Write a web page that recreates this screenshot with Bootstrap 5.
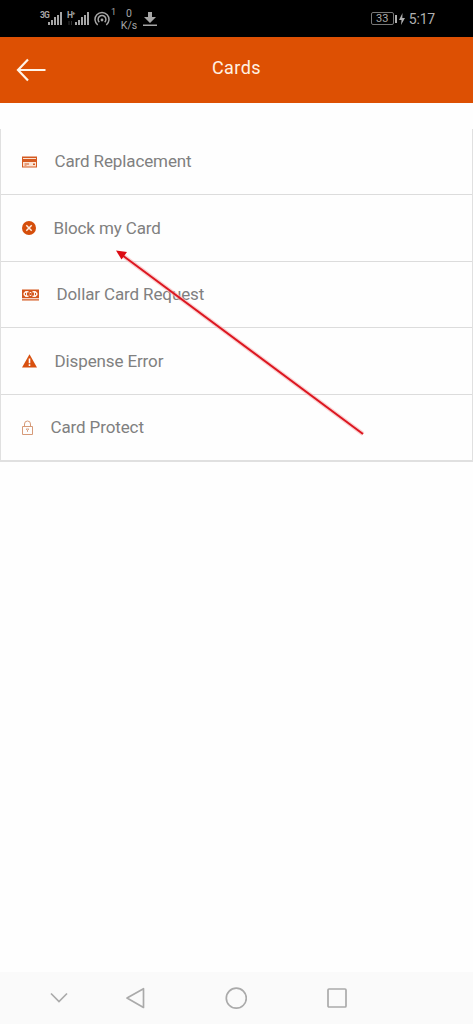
<!DOCTYPE html>
<html lang="en">
<head>
<meta charset="utf-8">
<meta name="viewport" content="width=device-width, initial-scale=1">
<title>Cards</title>
<link href="https://cdn.jsdelivr.net/npm/bootstrap@5.3.0/dist/css/bootstrap.min.css" rel="stylesheet">
<style>
body{font-family:Roboto,sans-serif;height:1024px;overflow:hidden;background:#fefefe}
svg{display:block;flex:none}
.status{height:37px;background:#000;color:#a6a6a6;padding:0 38px 0 40px}
.net{font-size:8.5px;line-height:8px;font-weight:700;width:8px;letter-spacing:-.9px;margin-top:11px}
.net sup{font-size:6px}
.tether{font-size:9px;line-height:9px;margin:8px 0 0 1px;width:6px}
.rate{font-size:10.5px;line-height:12px;width:20px;margin:8px 4px 0 2px}
.battery{width:23px;height:13px;border:1px solid #777;border-radius:2px;font-size:11px;line-height:11px;color:#aaa}
.clock{font-size:14px;line-height:16px;color:#b0b0b0;margin-left:4px;letter-spacing:-.2px}
.appbar{height:66px;background:#dd5003;color:#fff2e4;padding:0 16px}
.appbar .side{width:30px}
.title{font-size:18px;font-weight:400;line-height:22px;letter-spacing:.45px;margin-top:-5px}
.menu{margin-top:26px;border:solid #e0e0e0;border-width:0 1px 2px;border-radius:0;height:333px}
.menu .list-group-item{flex:1 1 0;border-color:#dcdcdc;padding:0 21px;color:#808080;font-size:17px;letter-spacing:-.12px;line-height:20px;background:#fefefe}
.menu .list-group-item:last-child{border-bottom:0}
.menu span{margin:-.5px 0 0 17.500px}
.pointer{left:100px;top:240px;pointer-events:none;z-index:2}
.navkeys{height:52px;background:#fafafa;padding-left:50px}
.key-back{margin-left:57px}
.key-next{margin-left:80px}
</style>
</head>
<body class="d-flex flex-column">
<header class="status d-flex justify-content-between">
  <div class="d-flex">
    <span class="net">3G</span>
    <svg width="15" height="37" fill="#a6a6a6"><path d="M0 22h2v3H0zM3 20h2v5H3zM6 17h2v8H6zM9 15h2v10H9zM12 12h2v13h-2z"/></svg>
    <span class="net ms-1">H<sup>+</sup></span>
    <svg width="15" height="37" fill="#a6a6a6" overflow="visible"><path d="M0 22h2v3H0zM3 20h2v5H3zM6 17h2v8H6zM9 15h2v10H9zM12 12h2v13h-2z"/><path d="M-6 21v4M-3.500 21v4" stroke="#333"/></svg>
    <svg class="ms-1" width="16" height="37" viewBox="0 0 16 37" fill="none" stroke="#a6a6a6" stroke-width="1.5"><path d="M3.700 25a7 7 0 1 1 8.600 0M5.300 22.200a3.900 3.900 0 1 1 5.400 0"/><circle cx="8" cy="20" r="1.400" fill="#a6a6a6" stroke="none"/></svg>
    <span class="tether">1</span>
    <div class="rate text-center">0<br>K/s</div>
    <svg width="14" height="37" fill="#a6a6a6"><path d="M5 12h4v5h4l-6 6-6-6h4zM0 24.500h14v1.500H0z"/></svg>
  </div>
  <div class="d-flex align-items-center">
    <div class="battery text-center">33</div>
    <svg width="11" height="14" fill="#b0b0b0"><path d="M1 3h2v8H1zM8.500 1 5 8h2.500L7 13l4-7H8.300z"/></svg>
    <span class="clock">5:17</span>
  </div>
</header>
<nav class="appbar d-flex align-items-center justify-content-between">
  <svg class="side" width="30" height="24" fill="none" stroke="#fff4e8" stroke-width="2.200"><path d="M12 1.500 2 12l10 10.500M1.500 12H29.500"/></svg>
  <h1 class="title mb-0">Cards</h1>
  <span class="side"></span>
</nav>
<main class="flex-grow-1">
  <div class="list-group list-group-flush menu">
    <a class="list-group-item d-flex align-items-center" href="#"><svg width="15" height="12"><path fill="#d55a20" d="M0 .5h15v11H0z"/><path fill="#fbe3d4" d="M1 2h13v1H1zM1 6h13v4.500H1z"/><path fill="#d55a20" d="M2.500 7.500H7v1H2.500zM11 7.500h2v1.500h-2zM2.500 9.200h2v.6h-2z"/></svg><span>Card Replacement</span></a>
    <a class="list-group-item d-flex align-items-center" href="#"><svg width="14" height="14"><circle cx="7" cy="7" r="7" fill="#d54e0b"/><path d="m4.300 4.300 5.400 5.400m0-5.400-5.400 5.400" stroke="#ffeee2" stroke-width="1.500"/></svg><span>Block my Card</span></a>
    <a class="list-group-item d-flex align-items-center" href="#"><svg width="17" height="12"><path fill="#d4561d" d="M0 .5h17v8.700H0zM0 10.300h17v1.200H0z"/><path fill="#fff0e6" d="M1.500 4 3.500 2h3v1.500H5v3h1.500V8h-3l-2-2zM15.500 4l-2-2h-3v1.500H12v3h-1.500V8h3l2-2zM7.700 3h1.600v4H7.700z"/><path d="M3.500 4v2M13.500 4v2M8.500 4v2" stroke="#d4561d"/></svg><span>Dollar Card Request</span></a>
    <a class="list-group-item d-flex align-items-center" href="#"><svg width="15" height="14"><path fill="#d8500f" d="M7.500.3 15 13.500H0z"/><path d="M7.500 4.500v4.800M7.500 10.300v1.700" stroke="#fff" stroke-width="1.600"/></svg><span>Dispense Error</span></a>
    <a class="list-group-item d-flex align-items-center" href="#"><svg width="11" height="15" fill="none" stroke="#d69a78"><path d="M.5 6.500h10v8H.5zM2.500 6.500V4a3 3 0 0 1 6 0v2.500"/><path d="M4 9h3L5.500 10.500zM5.500 10v2" stroke-width=".8"/></svg><span>Card Protect</span></a>
  </div>
</main>
<svg class="pointer position-absolute" width="280" height="210" viewBox="100 240 280 210"><path d="M122 255 363 434" stroke="#f9b5b5" stroke-width="4.500" opacity=".6"/><path d="M122 255 363 434" stroke="#dc1620" stroke-width="2"/><path fill="#dc0c14" d="m116 250.500 11 1.500-5.500 7.500z"/></svg>
<footer class="navkeys d-flex align-items-center">
  <svg width="18" height="52" fill="none" stroke="#aaa" stroke-width="1.700"><path d="m1 21.500 8 8 8-8"/></svg>
  <svg class="key-back" width="20" height="52" fill="none" stroke="#aaa" stroke-width="1.700" stroke-linejoin="round"><path d="M18.500 16.700v18.800L2 26.100z"/></svg>
  <svg class="key-next" width="22" height="52" fill="none" stroke="#aaa" stroke-width="1.700"><circle cx="11.300" cy="26.200" r="10"/></svg>
  <svg class="key-next" width="20" height="52" fill="none" stroke="#aaa" stroke-width="1.700"><rect x="1" y="17" width="18" height="18" rx="1"/></svg>
</footer>
</body>
</html>
